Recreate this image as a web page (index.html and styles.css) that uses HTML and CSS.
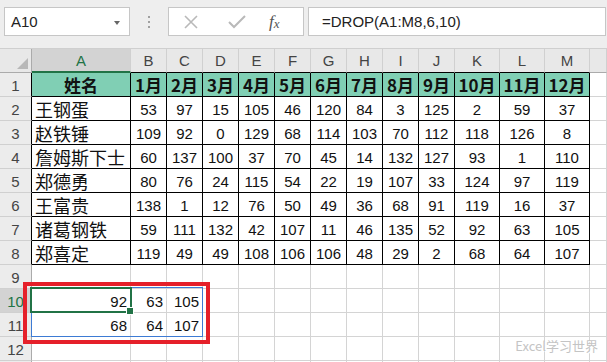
FILE: index.html
```html
<!DOCTYPE html>
<html lang="zh">
<head>
  <meta charset="UTF-8" />
  <title>DROP</title>
  <link rel="stylesheet" href="styles.css">
</head>
<body>
  <div class="app">
    <div class="fbar">
      <div class="namebox">A10<span class="caret"></span></div>
      <div class="grip"><i></i><i></i><i></i></div>
      <div class="fxbox">
        <svg width="16" height="16" viewBox="0 0 16 16"><path d="M2 2 L14 14 M14 2 L2 14" stroke="#b9b9b9" stroke-width="1.6" fill="none"/></svg>
        <svg width="18" height="14" viewBox="0 0 18 14"><path d="M1 7 L6 12 L17 1" stroke="#b9b9b9" stroke-width="2" fill="none"/></svg>
        <span class="fx">f<sub>x</sub></span>
      </div>
      <div class="formula">=DROP(A1:M8,6,10)</div>
    </div>

    <div class="sheet">
      <div class="row colhead">
        <span class="corner"><b></b></span>
        <span class="sel t">A</span><span class="t">B</span><span class="t">C</span><span class="t">D</span><span class="t">E</span><span class="t">F</span><span class="t">G</span><span class="t">H</span><span class="t">I</span><span class="t">J</span><span class="t">K</span><span class="t">L</span><span class="t">M</span><span></span>
      </div>
      <div class="row">
        <span class="rh t">1</span>
        <span class="t h">姓名</span><span class="t h">1月</span><span class="t h">2月</span><span class="t h">3月</span><span class="t h">4月</span><span class="t h">5月</span><span class="t h">6月</span><span class="t h">7月</span><span class="t h">8月</span><span class="t h">9月</span><span class="t h">10月</span><span class="t h">11月</span><span class="t h">12月</span><span></span>
      </div>
      <div class="row">
        <span class="rh t">2</span>
        <span class="t n">王钢蛋</span><span class="t">53</span><span class="t">97</span><span class="t">15</span><span class="t">105</span><span class="t">46</span><span class="t">120</span><span class="t">84</span><span class="t">3</span><span class="t">125</span><span class="t">2</span><span class="t">59</span><span class="t">37</span><span></span>
      </div>
      <div class="row">
        <span class="rh t">3</span>
        <span class="t n">赵铁锤</span><span class="t">109</span><span class="t">92</span><span class="t">0</span><span class="t">129</span><span class="t">68</span><span class="t">114</span><span class="t">103</span><span class="t">70</span><span class="t">112</span><span class="t">118</span><span class="t">126</span><span class="t">8</span><span></span>
      </div>
      <div class="row">
        <span class="rh t">4</span>
        <span class="t n">詹姆斯下士</span><span class="t">60</span><span class="t">137</span><span class="t">100</span><span class="t">37</span><span class="t">70</span><span class="t">45</span><span class="t">14</span><span class="t">132</span><span class="t">127</span><span class="t">93</span><span class="t">1</span><span class="t">110</span><span></span>
      </div>
      <div class="row">
        <span class="rh t">5</span>
        <span class="t n">郑德勇</span><span class="t">80</span><span class="t">76</span><span class="t">24</span><span class="t">115</span><span class="t">54</span><span class="t">22</span><span class="t">19</span><span class="t">107</span><span class="t">33</span><span class="t">124</span><span class="t">97</span><span class="t">119</span><span></span>
      </div>
      <div class="row">
        <span class="rh t">6</span>
        <span class="t n">王富贵</span><span class="t">138</span><span class="t">1</span><span class="t">12</span><span class="t">76</span><span class="t">50</span><span class="t">49</span><span class="t">36</span><span class="t">68</span><span class="t">91</span><span class="t">119</span><span class="t">16</span><span class="t">37</span><span></span>
      </div>
      <div class="row">
        <span class="rh t">7</span>
        <span class="t n">诸葛钢铁</span><span class="t">59</span><span class="t">111</span><span class="t">132</span><span class="t">42</span><span class="t">107</span><span class="t">11</span><span class="t">46</span><span class="t">135</span><span class="t">52</span><span class="t">92</span><span class="t">63</span><span class="t">105</span><span></span>
      </div>
      <div class="row">
        <span class="rh t">8</span>
        <span class="t n">郑喜定</span><span class="t">119</span><span class="t">49</span><span class="t">49</span><span class="t">108</span><span class="t">106</span><span class="t">106</span><span class="t">48</span><span class="t">29</span><span class="t">2</span><span class="t">68</span><span class="t">64</span><span class="t">107</span><span></span>
      </div>
      <div class="row">
        <span class="rh">9</span>
        <span></span><span></span><span></span><span></span><span></span><span></span><span></span><span></span><span></span><span></span><span></span><span></span><span></span><span></span>
      </div>
      <div class="row">
        <span class="rh sel">10</span>
        <span class="r">92</span><span class="r">63</span><span class="r">105</span><span></span><span></span><span></span><span></span><span></span><span></span><span></span><span></span><span></span><span></span><span></span>
      </div>
      <div class="row">
        <span class="rh">11</span>
        <span class="r">68</span><span class="r">64</span><span class="r">107</span><span></span><span></span><span></span><span></span><span></span><span></span><span></span><span></span><span></span><span></span><span></span>
      </div>
      <div class="row">
        <span class="rh">12</span>
        <span></span><span></span><span></span><span></span><span></span><span></span><span></span><span></span><span></span><span></span><span></span><span></span><span></span><span></span>
      </div>
      <div class="row">
        <span class="rh"></span>
        <span></span><span></span><span></span><span></span><span></span><span></span><span></span><span></span><span></span><span></span><span></span><span></span><span></span><span></span>
      </div>

      <!-- overlays: spill range, active cell, red highlight -->
      <div class="spill"></div>
      <div class="active"><i></i></div>
      <div class="mark"></div>
    </div>

    <div class="watermark">Excel学习世界</div>
  </div>
</body>
</html>
```

FILE: styles.css
```css
body {
  margin: 0;
  background-color: #fff;
  font-family: 'Liberation Sans', 'Noto Sans CJK SC', sans-serif;
  overflow: hidden;
}
.app {
  position: relative;
  width: 607px;
  height: 362px;
  overflow: hidden;
}
.fbar {
  display: flex;
  align-items: flex-start;
  height: 48px;
  padding-top: 7px;
  box-sizing: border-box;
  background-color: #eeeeee;
}
.namebox {
  position: relative;
  margin-left: 4px;
  width: 126px;
  height: 29px;
  box-sizing: border-box;
  border: 1px solid #c6c6c6;
  background-color: #fff;
  padding-left: 6px;
  font-size: 15px;
  line-height: 27px;
  color: #222;
}
.caret {
  position: absolute;
  right: 9px;
  top: 13px;
  border-left: 3px solid transparent;
  border-right: 3px solid transparent;
  border-top: 4px solid #666;
}
.grip {
  width: 38px;
  height: 29px;
  display: flex;
  flex-direction: column;
  align-items: center;
  justify-content: center;
  gap: 3px;
}
.grip i {
  width: 2px;
  height: 2px;
  background-color: #a0a0a0;
}
.fxbox {
  width: 136px;
  height: 29px;
  box-sizing: border-box;
  border: 1px solid #c6c6c6;
  background-color: #fff;
  display: flex;
  align-items: center;
  padding-left: 14px;
  gap: 29px;
}
.fx {
  font-family: 'Liberation Serif', serif;
  font-style: italic;
  font-size: 17px;
  color: #555;
  margin-left: -6px;
}
.fx sub {
  font-size: 13px;
  vertical-align: -1px;
}
.formula {
  flex: 1;
  margin-left: 4px;
  margin-right: 1px;
  height: 29px;
  box-sizing: border-box;
  border: 1px solid #c6c6c6;
  background-color: #fff;
  padding-left: 13px;
  font-size: 15px;
  line-height: 27px;
  color: #222;
}
.sheet {
  position: relative;
}
.row {
  display: grid;
  grid-template-columns: 32px 99px repeat(9, 36px) repeat(3, 45px) 1fr;
  height: 24px;
}
.row > span {
  box-sizing: border-box;
  border-right: 1px solid #d4d4d4;
  border-bottom: 1px solid #d4d4d4;
  display: flex;
  align-items: center;
  justify-content: center;
  white-space: nowrap;
  overflow: hidden;
  font-size: 15px;
  color: #111;
  padding-top: 1px;
}
.row > .t {
  border-right-color: #000;
  border-bottom-color: #000;
}
.colhead {
  border-top: 1px solid #cfcfcf;
  height: 24px;
}
.colhead > span {
  background-color: #e8e8e8;
  border-right-color: #d0d0d0;
  color: #444;
  font-size: 15px;
  padding-top: 0;
}
.colhead > .t {
  border-right-color: #d0d0d0;
}
.colhead > span:last-child {
  border-bottom-color: #ababab;
}
.colhead > .sel {
  background-color: #d3d3d3;
  color: #217346;
  border-bottom: 2px solid #217346;
}
.corner {
  position: relative;
  border-right-color: #ababab !important;
  border-bottom-color: #ababab !important;
}
.corner b {
  position: absolute;
  right: 3px;
  bottom: 3px;
  border-left: 11px solid transparent;
  border-bottom: 11px solid #b8b8b8;
}
.row > .rh {
  background-color: #ececec;
  color: #444;
  border-right-color: #ababab;
  border-bottom-color: #d0d0d0;
  font-size: 15px;
}
.row > .rh.t {
  border-right-color: #000;
}
.row > .rh.sel {
  background-color: #d3d3d3;
  color: #217346;
}
.row > .h {
  background-color: #80cfb4;
  font-family: 'Noto Sans CJK SC', sans-serif;
  font-weight: bold;
  font-size: 17px;
  color: #111;
  padding-top: 0;
}
.row > .n {
  justify-content: flex-start;
  padding-left: 3px;
  padding-top: 0;
  font-family: 'Noto Sans CJK SC', sans-serif;
  font-size: 18px;
}
.row > .r {
  justify-content: flex-end;
  padding-right: 3px;
}
.spill {
  position: absolute;
  left: 31px;
  top: 239px;
  width: 172px;
  height: 50px;
  box-sizing: border-box;
  border: 1px solid #3d7bd4;
}
.active {
  position: absolute;
  left: 30px;
  top: 239px;
  width: 102px;
  height: 26px;
  box-sizing: border-box;
  border: 2px solid #217346;
}
.active i {
  position: absolute;
  right: -4px;
  bottom: -4px;
  width: 6px;
  height: 6px;
  background-color: #217346;
  border: 1px solid #fff;
}
.mark {
  position: absolute;
  left: 23px;
  top: 234px;
  width: 187px;
  height: 62px;
  box-sizing: border-box;
  border: 4px solid #e5202a;
}
.watermark {
  position: absolute;
  right: 9px;
  bottom: 7px;
  font-family: 'Noto Sans CJK SC', sans-serif;
  font-size: 13px;
  color: #c4c4c4;
  text-shadow: 1px 1px 0 #fff;
}
```
